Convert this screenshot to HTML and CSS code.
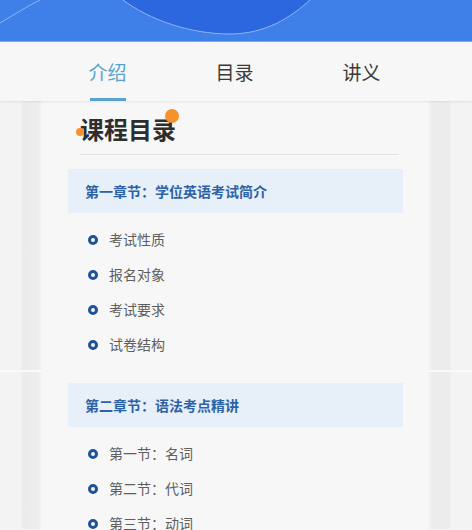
FILE: index.html
```html
<html>

<head>
	<title>课程目录</title>
	<meta name="viewport" content="width=device-width, initial-scale=1">
	<meta http-equiv="Content-Type" content="text/html; charset=UTF-8">
	<link rel="stylesheet" href="styles.css">
</head>

<body>
	<div class="header">
		<svg class="wave" width="472" height="42" viewBox="0 0 472 42">
			<path d="M123 0 C150 20 190 34 230 34 C265 34 290 18 310 0 Z" fill="#2d67df" />
			<path d="M123 0 C150 20 190 34 230 34 C265 34 290 18 310 0" fill="none" stroke="#8fb4f2" stroke-width="1" />
			<path d="M0 23 C15 14 28 6 40 0" fill="none" stroke="#8fb4f2" stroke-width="1" />
		</svg>
	</div>
	<div class="tabs">
		<div class="tab active">介绍</div>
		<div class="tab">目录</div>
		<div class="tab">讲义</div>
	</div>
	<div class="stage">
		<div class="side side-left"></div>
		<div class="card">
			<div class="title">
				<span class="dot dot-big"></span>
				<span class="dot dot-small"></span>
				课程目录
			</div>
			<div class="divider"></div>
			<div class="chapter">第一章节：学位英语考试简介</div>
			<ul class="items">
				<li>考试性质</li>
				<li>报名对象</li>
				<li>考试要求</li>
				<li>试卷结构</li>
			</ul>
			<div class="chapter">第二章节：语法考点精讲</div>
			<ul class="items">
				<li>第一节：名词</li>
				<li>第二节：代词</li>
				<li>第三节：动词</li>
			</ul>
		</div>
		<div class="side side-right"></div>
	</div>
</body>

</html>
```

FILE: styles.css
```css
body {
	margin: 0;
	background: #f4f4f4;
	font-family: "Noto Sans CJK SC", "Noto Sans", sans-serif;
	overflow: hidden;
}

.header {
	height: 41px;
	background: #3f7fe8;
	border-bottom: 1px solid #7fa8ee;
}

.wave {
	display: block;
}

.tabs {
	display: flex;
	height: 59px;
	padding-left: 44px;
	background: #f7f7f7;
	box-shadow: 0 1px 2px rgba(0, 0, 0, 0.08);
	position: relative;
	z-index: 2;
}

.tab {
	width: 127px;
	display: flex;
	align-items: center;
	justify-content: center;
	font-size: 19px;
	color: #3a3a3a;
	position: relative;
}

.tab.active {
	color: #56a3cf;
}

.tab.active::after {
	content: "";
	position: absolute;
	bottom: 0;
	left: 46px;
	width: 36px;
	height: 3px;
	background: #5aa2cf;
}

.stage {
	display: flex;
}

.side {
	width: 42px;
	height: 428px;
	background:
		linear-gradient(to bottom, transparent 269px, #fafafa 269px, #fafafa 271px, transparent 271px),
		linear-gradient(to right, #f3f3f3 0, #f3f3f3 20px, #ebebeb 24px, #ededed 38px, #f5f5f5 42px);
}

.side-right {
	width: 44px;
	background:
		linear-gradient(to bottom, transparent 269px, #fafafa 269px, #fafafa 271px, transparent 271px),
		linear-gradient(to right, #f5f5f5 0, #ededed 4px, #ebebeb 20px, #f3f3f3 24px, #f3f3f3 44px);
}

.card {
	flex: 1;
	background: #f7f7f7;
	padding: 0 25px 0 26px;
}

.title {
	position: relative;
	font-size: 24px;
	font-weight: bold;
	color: #2e2e2e;
	padding: 13px 0 0 12px;
	line-height: 30px;
}

.dot {
	position: absolute;
	border-radius: 50%;
	background: #f5922b;
}

.dot-big {
	width: 14px;
	height: 14px;
	left: 97px;
	top: 8px;
}

.dot-small {
	width: 8px;
	height: 8px;
	left: 8px;
	top: 27px;
}

.divider {
	height: 1px;
	background: #e2e2e2;
	margin: 10px 4px 14px 12px;
}

.chapter {
	background: #e7eff9;
	color: #2d62a6;
	font-size: 14px;
	font-weight: bold;
	height: 44px;
	line-height: 44px;
	padding-left: 17px;
}

.items {
	list-style: none;
	margin: 0;
	padding: 9px 0 21px 20px;
}

.items li {
	font-size: 14px;
	color: #5e5e5e;
	height: 35px;
	line-height: 35px;
	display: flex;
	align-items: center;
}

.items li::before {
	content: "";
	width: 4px;
	height: 4px;
	border: 3px solid #1f5398;
	border-radius: 50%;
	margin-right: 11px;
}
```
